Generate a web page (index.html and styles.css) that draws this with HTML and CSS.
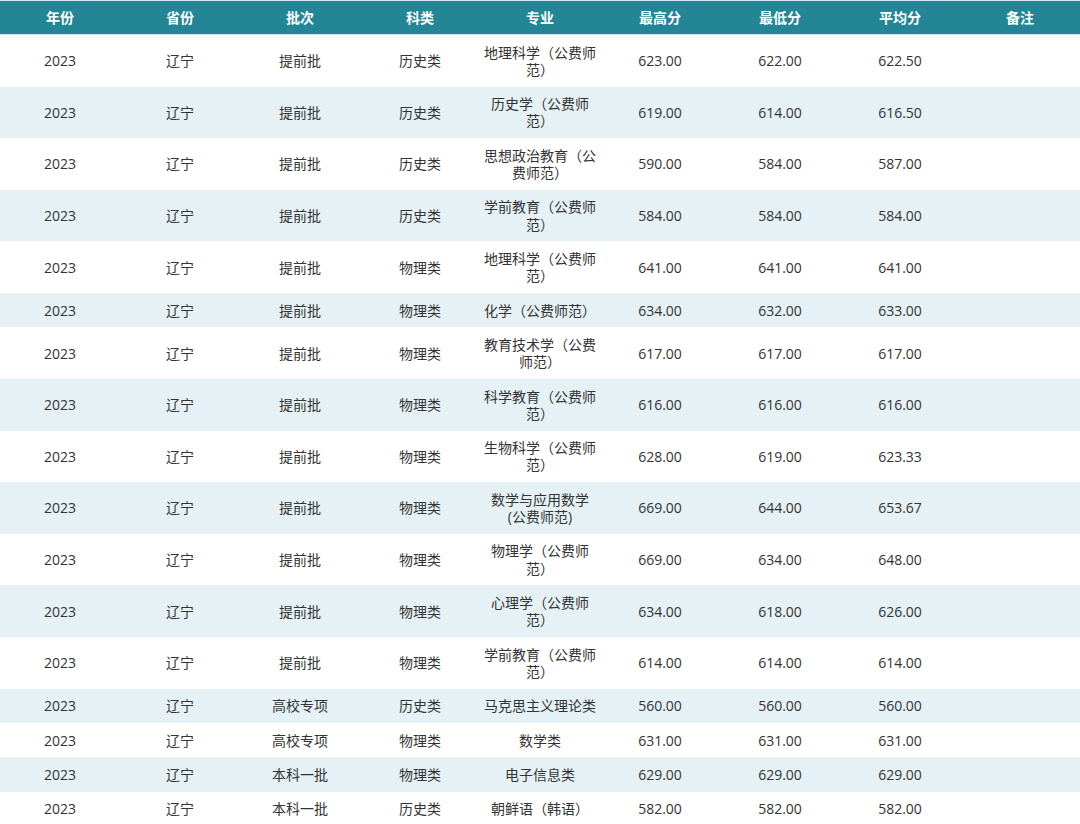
FILE: index.html
```html
<!DOCTYPE html>
<html lang="zh-CN">
<head>
<meta charset="utf-8">
<title>录取分数</title>
<link rel="stylesheet" href="styles.css">
</head>
<body>
<table class="score-table">
  <colgroup>
    <col><col><col><col><col><col><col><col><col>
  </colgroup>
  <thead>
    <tr><th>年份</th><th>省份</th><th>批次</th><th>科类</th><th>专业</th><th>最高分</th><th>最低分</th><th>平均分</th><th>备注</th></tr>
  </thead>
  <tbody>
    <tr><td>2023</td><td>辽宁</td><td>提前批</td><td>历史类</td><td>地理科学（公费师范）</td><td>623.00</td><td>622.00</td><td>622.50</td><td></td></tr>
    <tr><td>2023</td><td>辽宁</td><td>提前批</td><td>历史类</td><td>历史学（公费师范）</td><td>619.00</td><td>614.00</td><td>616.50</td><td></td></tr>
    <tr><td>2023</td><td>辽宁</td><td>提前批</td><td>历史类</td><td>思想政治教育（公费师范）</td><td>590.00</td><td>584.00</td><td>587.00</td><td></td></tr>
    <tr><td>2023</td><td>辽宁</td><td>提前批</td><td>历史类</td><td>学前教育（公费师范）</td><td>584.00</td><td>584.00</td><td>584.00</td><td></td></tr>
    <tr><td>2023</td><td>辽宁</td><td>提前批</td><td>物理类</td><td>地理科学（公费师范）</td><td>641.00</td><td>641.00</td><td>641.00</td><td></td></tr>
    <tr><td>2023</td><td>辽宁</td><td>提前批</td><td>物理类</td><td>化学（公费师范）</td><td>634.00</td><td>632.00</td><td>633.00</td><td></td></tr>
    <tr><td>2023</td><td>辽宁</td><td>提前批</td><td>物理类</td><td>教育技术学（公费师范）</td><td>617.00</td><td>617.00</td><td>617.00</td><td></td></tr>
    <tr><td>2023</td><td>辽宁</td><td>提前批</td><td>物理类</td><td>科学教育（公费师范）</td><td>616.00</td><td>616.00</td><td>616.00</td><td></td></tr>
    <tr><td>2023</td><td>辽宁</td><td>提前批</td><td>物理类</td><td>生物科学（公费师范）</td><td>628.00</td><td>619.00</td><td>623.33</td><td></td></tr>
    <tr><td>2023</td><td>辽宁</td><td>提前批</td><td>物理类</td><td>数学与应用数学(公费师范)</td><td>669.00</td><td>644.00</td><td>653.67</td><td></td></tr>
    <tr><td>2023</td><td>辽宁</td><td>提前批</td><td>物理类</td><td>物理学（公费师范）</td><td>669.00</td><td>634.00</td><td>648.00</td><td></td></tr>
    <tr><td>2023</td><td>辽宁</td><td>提前批</td><td>物理类</td><td>心理学（公费师范）</td><td>634.00</td><td>618.00</td><td>626.00</td><td></td></tr>
    <tr><td>2023</td><td>辽宁</td><td>提前批</td><td>物理类</td><td>学前教育（公费师范）</td><td>614.00</td><td>614.00</td><td>614.00</td><td></td></tr>
    <tr><td>2023</td><td>辽宁</td><td>高校专项</td><td>历史类</td><td>马克思主义理论类</td><td>560.00</td><td>560.00</td><td>560.00</td><td></td></tr>
    <tr><td>2023</td><td>辽宁</td><td>高校专项</td><td>物理类</td><td>数学类</td><td>631.00</td><td>631.00</td><td>631.00</td><td></td></tr>
    <tr><td>2023</td><td>辽宁</td><td>本科一批</td><td>物理类</td><td>电子信息类</td><td>629.00</td><td>629.00</td><td>629.00</td><td></td></tr>
    <tr><td>2023</td><td>辽宁</td><td>本科一批</td><td>历史类</td><td>朝鲜语（韩语）</td><td>582.00</td><td>582.00</td><td>582.00</td><td></td></tr>
  </tbody>
</table>
</body>
</html>
```
FILE: styles.css
```css
html, body {
  margin: 0;
  padding: 0;
  background: #ffffff;
}

.score-table {
  width: 1080px;
  table-layout: fixed;
  border-collapse: collapse;
  font-family: "Open Sans", "Noto Sans CJK SC", sans-serif;
  font-size: 14px;
  color: #333333;
  border-top: 1px solid #d6e9ee;
}

.score-table col {
  width: 120px;
}

.score-table th {
  background: #238595;
  color: #ffffff;
  font-weight: bold;
  height: 33px;
  padding: 0;
  line-height: 17px;
  text-align: center;
  border-bottom: 1px solid #cfe6ea;
}

.score-table td {
  padding: 8.6px 3px;
  line-height: 17.2px;
  text-align: center;
  vertical-align: middle;
  word-break: normal;
}

.score-table tbody tr:nth-child(even) td {
  background: #e5f1f4;
}
```
